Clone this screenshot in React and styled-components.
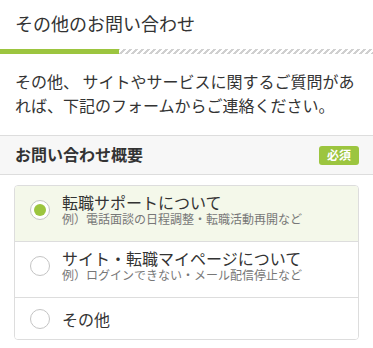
import styled, { createGlobalStyle } from "styled-components";

const GlobalStyle = createGlobalStyle`
  html, body {
    margin: 0;
    padding: 0;
    background: #fff;
  }
  body {
    font-family: "Noto Sans CJK JP", "Noto Sans", sans-serif;
    color: #333;
  }
  * {
    box-sizing: border-box;
  }
`;

const options = [
  {
    id: "support",
    label: "転職サポートについて",
    note: "例）電話面談の日程調整・転職活動再開など",
  },
  {
    id: "site",
    label: "サイト・転職マイページについて",
    note: "例）ログインできない・メール配信停止など",
  },
  { id: "other", label: "その他" },
];

export default function App() {
  return (
    <>
      <GlobalStyle />
      <StyledPage>
        <StyledTitle>その他のお問い合わせ</StyledTitle>
        <StyledBar>
          <StyledBarFill />
          <StyledBarRest />
        </StyledBar>
        <StyledIntro>
          その他、 サイトやサービスに関するご質問があれば、下記のフォームからご連絡ください。
        </StyledIntro>
        <StyledSectionHeader>
          <StyledSectionTitle>お問い合わせ概要</StyledSectionTitle>
          <StyledBadge>必須</StyledBadge>
        </StyledSectionHeader>
        <StyledList>
          {options.map((item, i) => (
            <StyledOption
              key={item.id}
              $selected={i === 0}
              $divided={i > 0}
              $short={!item.note}
            >
              <StyledRadio $selected={i === 0} />
              <StyledText>
                <StyledLabel>{item.label}</StyledLabel>
                {item.note && <StyledNote>{item.note}</StyledNote>}
              </StyledText>
            </StyledOption>
          ))}
        </StyledList>
      </StyledPage>
    </>
  );
}

const StyledPage = styled.main`
  width: 373px;
  padding-bottom: 9px;
`;

const StyledTitle = styled.h1`
  margin: 0;
  padding: 10px 15px 13px;
  font-size: 18px;
  line-height: 26px;
  font-weight: 400;
  color: #333;
`;

const StyledBar = styled.div`
  display: flex;
  height: 5px;
`;

const StyledBarFill = styled.span`
  width: 119px;
  background: #9cc53f;
`;

const StyledBarRest = styled.span`
  flex: 1;
  background: repeating-linear-gradient(
    -45deg,
    #d0d0d0 0 1.6px,
    #fff 1.6px 4.24px
  );
`;

const StyledIntro = styled.p`
  margin: 15px 0 18px;
  padding: 0 15px;
  font-size: 16px;
  line-height: 24px;
  color: #333;
`;

const StyledSectionHeader = styled.div`
  display: flex;
  justify-content: space-between;
  align-items: center;
  height: 40px;
  padding: 0 14px 0 15px;
  background: #f7f7f7;
  border-top: 1px solid #ddd;
  border-bottom: 1px solid #ddd;
`;

const StyledSectionTitle = styled.h2`
  margin: 0 0 2px;
  font-size: 16px;
  line-height: 22px;
  font-weight: 700;
  color: #333;
`;

const StyledBadge = styled.span`
  display: inline-flex;
  align-items: center;
  justify-content: center;
  width: 40px;
  height: 19px;
  border-radius: 3px;
  background: #9cc53f;
  color: #fff;
  font-size: 12px;
  font-weight: 700;
  line-height: 1;
`;

const StyledList = styled.div`
  margin: 10px 14px 0;
  border: 1px solid #ddd;
  border-radius: 4px;
  overflow: hidden;
`;

const StyledOption = styled.label`
  display: flex;
  align-items: center;
  gap: 12px;
  padding: ${({ $short }) => ($short ? "10px 15px" : "6px 15px 15px")};
  background: ${({ $selected }) => ($selected ? "#f4f8ea" : "#fff")};
  border-top: ${({ $divided }) => ($divided ? "1px solid #ddd" : "none")};
  cursor: pointer;
`;

const StyledRadio = styled.span`
  display: block;
  flex: 0 0 20px;
  position: relative;
  width: 20px;
  height: 20px;
  margin-top: 1px;
  border: 1px solid #c4c4c4;
  border-radius: 50%;
  background: #fff;

  &::after {
    content: "";
    position: absolute;
    inset: 3px;
    border-radius: 50%;
    background: ${({ $selected }) => ($selected ? "#9cc53f" : "transparent")};
  }
`;

const StyledText = styled.div`
  display: flex;
  flex-direction: column;
`;

const StyledLabel = styled.div`
  font-size: 16px;
  line-height: 20px;
  color: #333;
`;

const StyledNote = styled.div`
  font-size: 12px;
  line-height: 14px;
  color: #777;
`;
